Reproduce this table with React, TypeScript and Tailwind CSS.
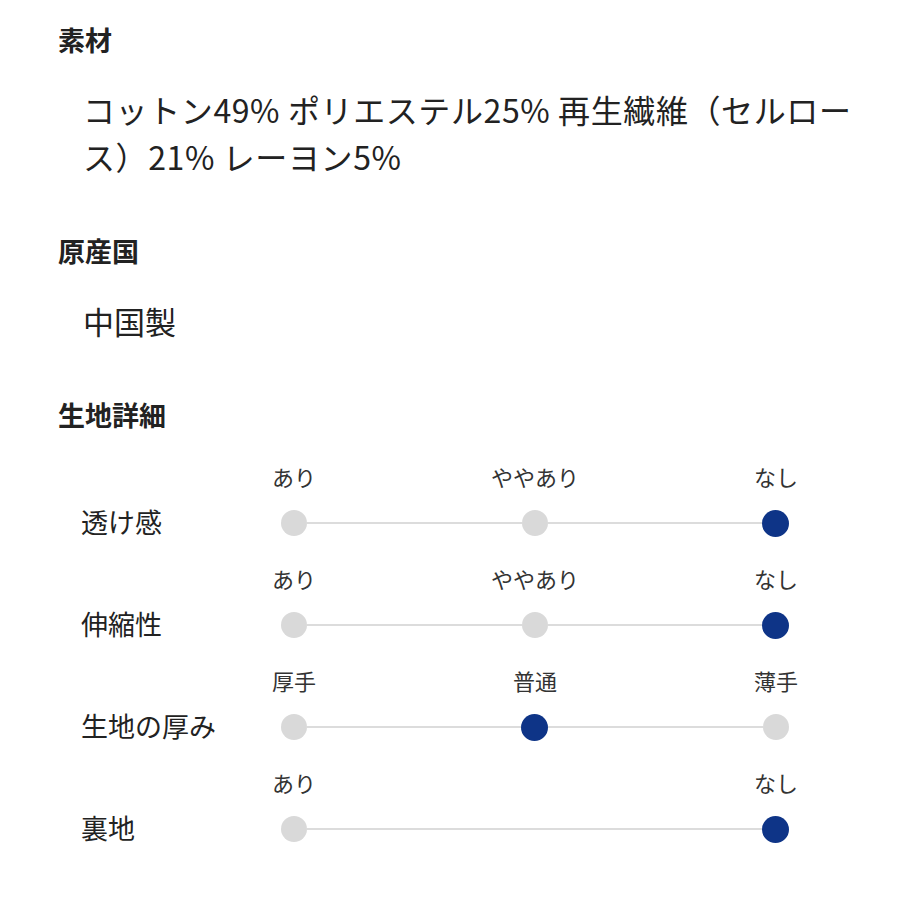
const FONT = "font-['Noto_Sans_CJK_JP','Noto_Sans',sans-serif]";

type Scale = {
  name: string;
  labels: string[];
  active: number;
};

const scales: Scale[] = [
  { name: '透け感', labels: ['あり', 'ややあり', 'なし'], active: 2 },
  { name: '伸縮性', labels: ['あり', 'ややあり', 'なし'], active: 2 },
  { name: '生地の厚み', labels: ['厚手', '普通', '薄手'], active: 1 },
  { name: '裏地', labels: ['あり', 'なし'], active: 1 },
];

function Dot({ on }: { on: boolean }) {
  return (
    <span
      className={`block shrink-0 rounded-full ${on ? 'h-[27px] w-[27px] bg-[#0e3487]' : 'h-[26px] w-[26px] bg-[#d9d9d9]'}`}
    />
  );
}

function ScaleRow({ scale }: { scale: Scale }) {
  return (
    <div className="flex items-end">
      <div className="w-[200px] pb-[1px] text-[27px] leading-[28px] text-[#222]">{scale.name}</div>
      <div className="flex w-[508px] flex-col">
        <div className="flex h-[30px] items-center justify-between text-[22px] text-[#333]">
          {scale.labels.map((l) => (
            <span key={l} className="flex w-[26px] justify-center whitespace-nowrap">
              {l}
            </span>
          ))}
        </div>
        <div className="mt-[18px] flex h-[28px] items-center">
          {scale.labels.map((l, i) => (
            <div key={l} className={`flex items-center ${i === 0 ? '' : 'flex-1'}`}>
              {i > 0 && <span className="block h-[2px] flex-1 bg-[#dcdcdc]" />}
              <Dot on={i === scale.active} />
            </div>
          ))}
        </div>
      </div>
    </div>
  );
}

export default function App() {
  return (
    <div className={`min-h-[900px] w-[900px] bg-white pl-[58px] pt-[24px] text-[#222] ${FONT}`}>
      <h2 className="text-[27px] font-bold leading-[32px]">素材</h2>
      <p className="mt-[30px] w-[812px] pl-[25px] text-[32px] leading-[47px] tracking-[0.6px]">
        コットン49% ポリエステル25% 再生繊維（セルロース）21% レーヨン5%
      </p>

      <h2 className="mt-[55px] text-[27px] font-bold leading-[32px]">原産国</h2>
      <p className="mt-[30px] pl-[25px] text-[31px] leading-[47px]">中国製</p>

      <h2 className="mt-[55px] text-[27px] font-bold leading-[32px]">生地詳細</h2>
      <div className="mt-[30px] flex flex-col gap-[26px] pl-[23px]">
        {scales.map((s) => (
          <ScaleRow key={s.name} scale={s} />
        ))}
      </div>
    </div>
  );
}
